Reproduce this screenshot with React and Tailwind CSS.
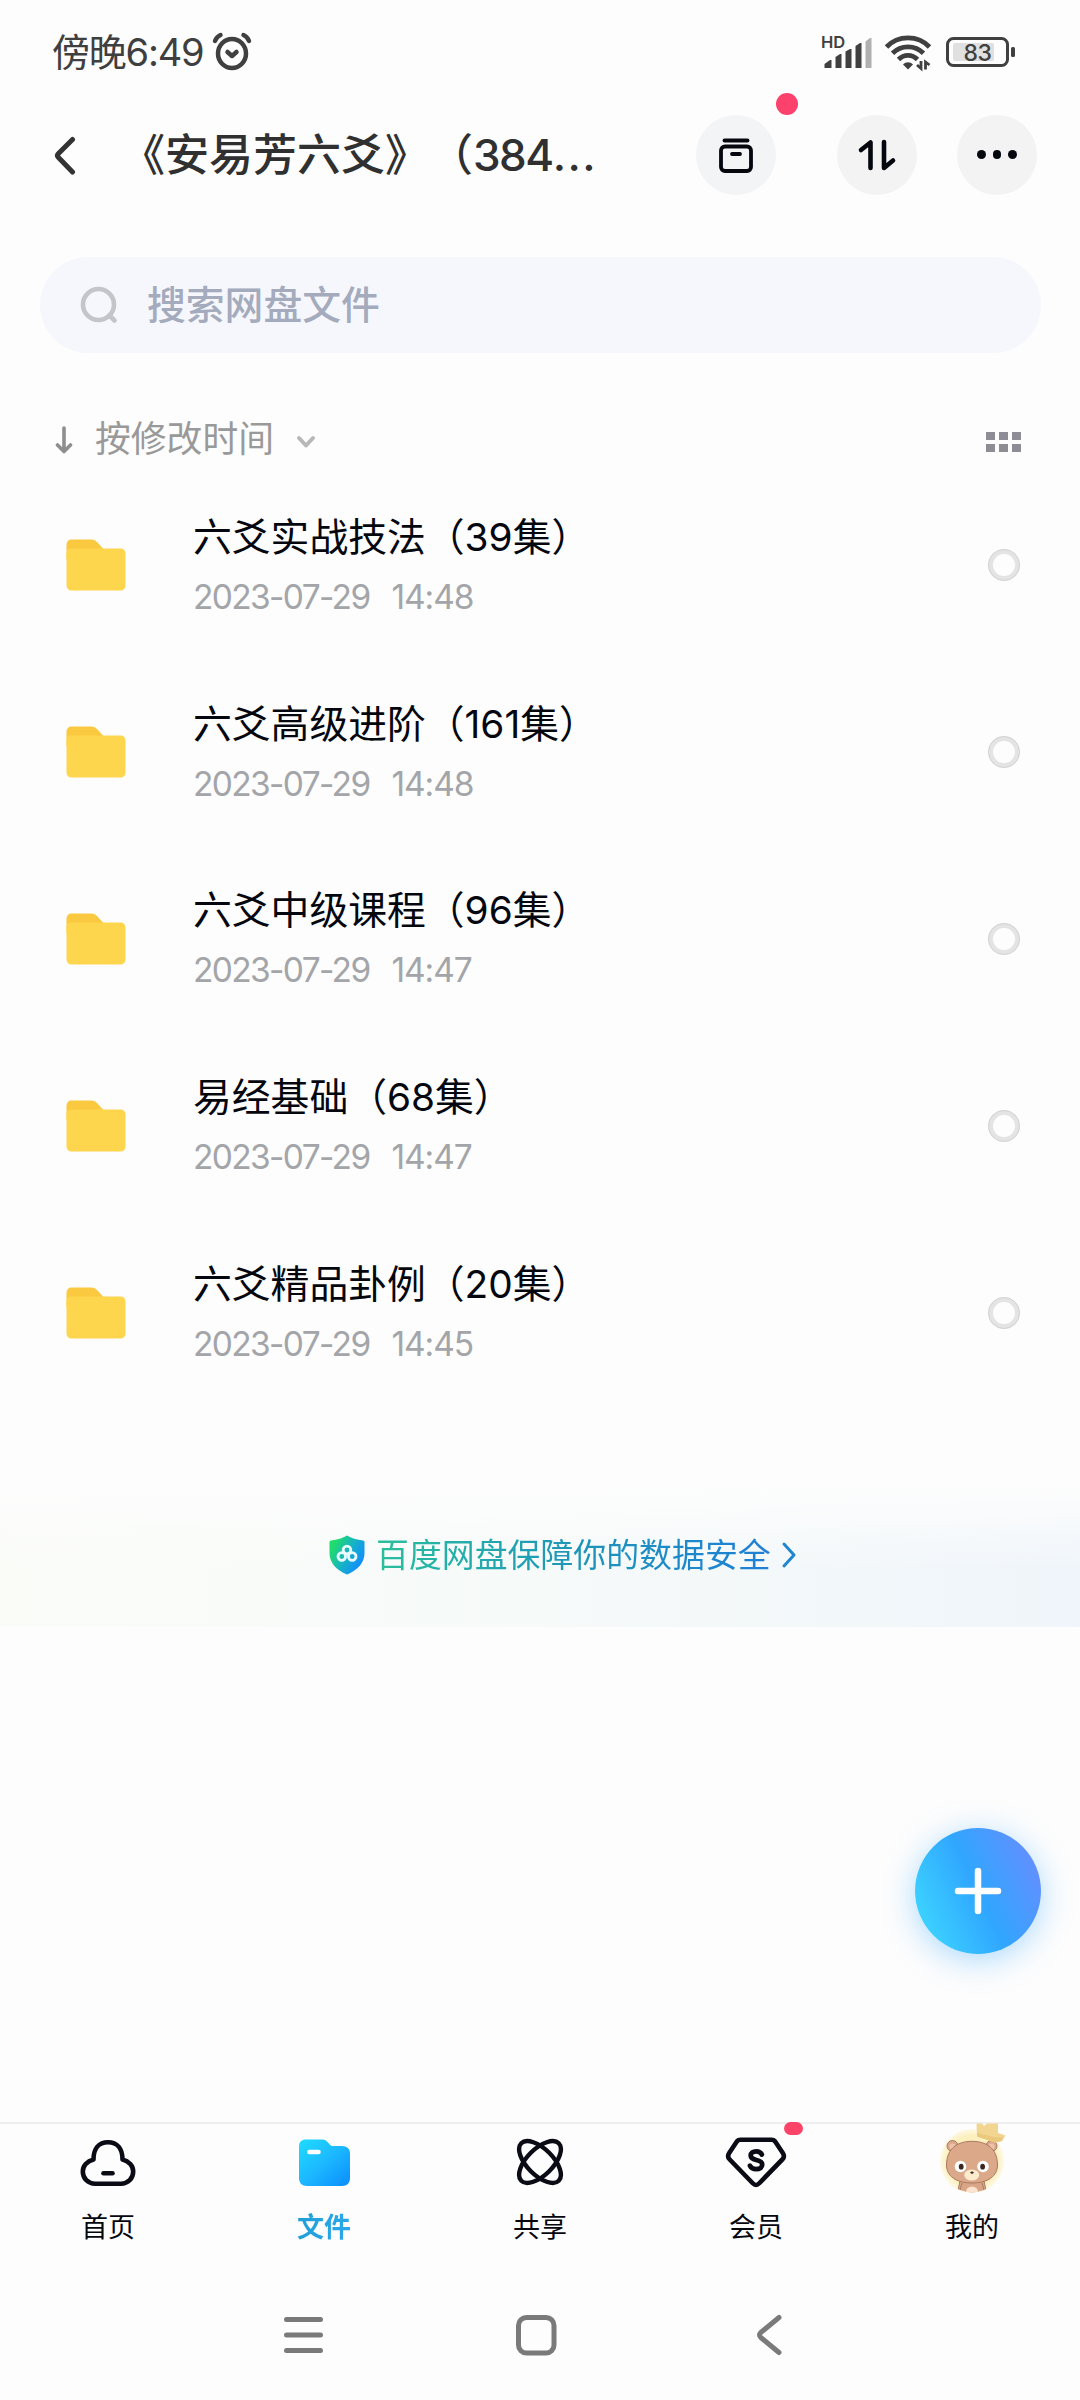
import React from 'react';

const FILES = [
  { name: ['六爻实战技法（', '39', '集）'], date: '2023-07-29', time: '14:48' },
  { name: ['六爻高级进阶（', '161', '集）'], date: '2023-07-29', time: '14:48' },
  { name: ['六爻中级课程（', '96', '集）'], date: '2023-07-29', time: '14:47' },
  { name: ['易经基础（', '68', '集）'], date: '2023-07-29', time: '14:47' },
  { name: ['六爻精品卦例（', '20', '集）'], date: '2023-07-29', time: '14:45' },
];

const TABS = [
  { label: '首页', icon: HomeIcon },
  { label: '文件', icon: FilesIcon, active: true },
  { label: '共享', icon: ShareIcon },
  { label: '会员', icon: MemberIcon, badge: true },
  { label: '我的', icon: BearAvatar },
];

function HomeIcon() {
  return (
    <svg className="mt-[2px]" width="56" height="48" viewBox="0 0 56 48" fill="none" stroke="#0b0b16" strokeWidth="4.6" strokeLinejoin="round">
      <path d="M13.5 20.5C13.5 9.500 19 3.300 28 3.300S42.500 9.500 42.500 20.500C49 22 53.200 27 53.200 32.500C53.200 39.500 48 44.700 41 44.700H15C8 44.700 2.800 39.500 2.800 32.500C2.800 27 7 22 13.500 20.500Z" />
      <path d="M23.500 34.200h9" strokeLinecap="round" />
    </svg>
  );
}

function FilesIcon() {
  return (
    <svg width="51" height="47" viewBox="0 0 51 47">
      <defs>
        <linearGradient id="tabFolder" x1="0" y1="0" x2="1" y2="1">
          <stop offset="0" stopColor="#1fdcff" />
          <stop offset="0.5" stopColor="#1cb8ff" />
          <stop offset="1" stopColor="#0a8dff" />
        </linearGradient>
      </defs>
      <path fill="url(#tabFolder)" d="M7 0.500H23C25.500 0.500 27 1.300 28.500 3L31 5.800C31.800 6.700 32.500 7 34 7H43C48 7 51 9.800 51 14.500V39C51 44 48 47 43 47H8C3 47 0 44 0 39V7.500C0 3 2.500 0.500 7 0.500Z" />
      <path d="M10.500 13h9" stroke="#fff" strokeWidth="4.600" strokeLinecap="round" />
    </svg>
  );
}

function ShareIcon() {
  return (
    <svg width="48" height="48" viewBox="0 0 48 48" fill="none" stroke="#0b0b16" strokeWidth="4.400">
      <ellipse cx="24" cy="24" rx="26.500" ry="13" transform="rotate(45 24 24)" />
      <ellipse cx="24" cy="24" rx="26.500" ry="13" transform="rotate(-45 24 24)" />
    </svg>
  );
}

function MemberIcon() {
  return (
    <svg width="62" height="51" viewBox="0 0 62 51" fill="none" stroke="#0b0b16" strokeLinecap="round" strokeLinejoin="round">
      <path strokeWidth="4.600" d="M15.500 2.800H46.500C48.300 2.800 49.500 3.500 50.500 5L57.800 16C59.500 18.600 59.300 20.500 57.300 22.500L34.500 46C32 48.600 30 48.600 27.500 46L4.700 22.500C2.700 20.500 2.500 18.600 4.200 16L11.500 5C12.500 3.500 13.700 2.800 15.500 2.800Z" />
      <path strokeWidth="4.800" d="M36.800 17.500C35.800 15.300 33.800 14.300 31.200 14.300C28 14.300 25.700 16 25.700 18.600C25.700 21.400 28.200 22.300 31.200 23C34.500 23.700 37.200 24.700 37.200 27.600C37.200 30.500 34.700 32.200 31.200 32.200C28.300 32.200 26 31 25 28.800" />
    </svg>
  );
}

function BearAvatar() {
  return (
    <svg className="-mt-[8px]" width="68" height="70" viewBox="0 0 68 70">
      <defs>
        <radialGradient id="halo">
          <stop offset="0.800" stopColor="#fdf0bf" />
          <stop offset="1" stopColor="#fef9e6" />
        </radialGradient>
        <clipPath id="avatarClip">
          <circle cx="34" cy="38" r="31.500" />
        </clipPath>
      </defs>
      <circle cx="34" cy="38" r="32" fill="url(#halo)" />
      <g clipPath="url(#avatarClip)" stroke="#a97a62" strokeWidth="1">
        <path fill="#d9a587" d="M22 58H46L49 72H19Z" />
        <ellipse cx="34" cy="69" rx="6" ry="5.500" fill="#fbe3d0" stroke="none" />
        <path fill="none" d="M24 60l-2 7M44 60l2 7" />
        <circle cx="14.500" cy="23" r="5.500" fill="#dca88a" />
        <circle cx="53.500" cy="23" r="5.500" fill="#dca88a" />
        <circle cx="14.500" cy="23.500" r="3" fill="#eec2aa" stroke="none" />
        <circle cx="53.500" cy="23.500" r="3" fill="#eec2aa" stroke="none" />
        <path fill="#dca88a" d="M34 18.300C50 18.300 59.500 27 59.500 42C59.500 53 50 60 34 60S8.500 53 8.500 42C8.500 27 18 18.300 34 18.300Z" />
      </g>
      <circle cx="22.500" cy="43.500" r="5.800" fill="#fff" />
      <circle cx="45" cy="43.500" r="5.800" fill="#fff" />
      <ellipse cx="23.200" cy="43.700" rx="2.400" ry="2.900" fill="#3d2620" />
      <ellipse cx="44.600" cy="43.700" rx="2.400" ry="2.900" fill="#3d2620" />
      <ellipse cx="33.700" cy="52" rx="7.500" ry="5.600" fill="#fdebcd" />
      <ellipse cx="34" cy="49.600" rx="1.600" ry="1.200" fill="#3d2620" />
      <path d="M38.500 0.500H44L46 3L49 0.500H60V10L67.500 12.500L64 18L57 19.500L39 13.500Z" fill="#f1d590" />
      <path d="M39 10L58 14.500L65 14L64 18L57 19.500L39 13.500Z" fill="#eac97c" />
    </svg>
  );
}

function FolderIcon() {
  return (
    <svg width="60" height="52" viewBox="0 0 60 52">
      <path fill="#fac93f" d="M6 0.500H25C28 0.500 29.500 1.500 31.500 3.500L37 9.500V20H0.500V6C0.500 2.500 2.500 0.500 6 0.500Z" />
      <path fill="#fdd64e" d="M0.500 15C0.500 11 2 9.500 6 9.500H54C57.500 9.500 59.500 11.500 59.500 15V46C59.500 49.500 57.500 51.500 54 51.500H6C2.500 51.500 0.500 49.500 0.500 46Z" />
    </svg>
  );
}

function StatusIcons() {
  return (
    <svg width="200" height="40" viewBox="820 32 200 40" fill="#404040">
      <text x="821" y="48" fontSize="16.500" fontWeight="600" fontFamily="Inter, sans-serif">HD</text>
      <path d="M824.500 64L830 60H831.500V68H824.500ZM835.500 57L840 54H841.500V68H835.500ZM845.500 51.500L850 49H851.500V68H845.500ZM855.500 46L860 43H861.500V68H855.500Z" />
      <path d="M865.500 41.500L870 38H871.500V68H865.500Z" fill="#b0b0b0" />
      {/* wifi arcs */}
      <g fill="none" stroke="#404040" strokeWidth="4.800">
        <path d="M886.500 47C898 34.800 918 34.800 929.500 47" />
        <path d="M892.500 53.300C901 44.800 915 44.800 923.500 53.300" />
        <path d="M898.500 59.500C904 54 912 54 917.500 59.500" />
      </g>
      <path d="M903 64.500C906 61.500 910 61.500 913 64.500L908 69.500Z" />
      <path d="M917 65l4 3.500V61M929.500 65l-4-3V69.500" fill="none" stroke="#404040" strokeWidth="2.800" />
      {/* battery */}
      <rect x="947.500" y="38.500" width="60" height="27" rx="6" fill="none" stroke="#404040" strokeWidth="3" />
      <rect x="953" y="43" width="41" height="18" rx="2" fill="#e0e0e0" />
      <rect x="1011" y="47" width="4" height="10" rx="1.500" />
      <text x="963.500" y="61" fontSize="23" fontWeight="500" fontFamily="Inter, sans-serif" letterSpacing="-0.500">83</text>
    </svg>
  );
}

function StatusBar() {
  return (
    <div className="flex h-[104px] items-center justify-between pl-[52px] pr-[60px] text-[#3f3f3f]">
      <div className="flex items-center gap-[9px]">
        <span className="text-[38px] leading-none tracking-[-1.2px]">傍晚6:49</span>
        <svg width="40" height="44" viewBox="0 0 40 44" fill="none" stroke="#404040" strokeWidth="4.500" strokeLinecap="round">
          <ellipse cx="20" cy="23.500" rx="14" ry="14.500" />
          <path d="M3 11C4 8.500 6 6 8.500 5M37 11C36 8.500 34 6 31.500 5" />
          <path d="M15.500 22l4.500 4l4.500-4" strokeLinejoin="round" />
        </svg>
      </div>
      <StatusIcons />
    </div>
  );
}

function Header() {
  return (
    <header className="flex h-[101px] items-center pl-[52px] pr-[42px]">
      <svg width="26" height="40" viewBox="0 0 26 40" fill="none" stroke="#333" strokeWidth="5" strokeLinecap="round" strokeLinejoin="round">
        <path d="M20.500 4.500L6 19C5.200 20 5.200 21 6 22L20.500 37" />
      </svg>
      <h1 className="ml-[43px] w-[575px] whitespace-nowrap text-[44px] font-medium leading-none text-[#303030] [text-spacing-trim:space-all]">
        《安易芳六爻》（<span className="tracking-[-1.5px]">384</span><span className="tracking-[1.5px]">...</span>
      </h1>
      <div className="relative flex size-20 items-center justify-center rounded-full bg-[#f3f4f6]">
        <svg width="36" height="36" viewBox="0 0 36 36" fill="none" stroke="#05070f" strokeWidth="3.800" strokeLinecap="round">
          <path d="M6.500 3.500h23" />
          <rect x="3" y="9.500" width="30" height="24.500" rx="4" />
          <path d="M14 17h8" />
        </svg>
        <span className="absolute -right-[22px] -top-[22px] size-[22px] rounded-full bg-[#fc416c]" />
      </div>
      <div className="ml-[61px] flex size-20 items-center justify-center rounded-full bg-[#f3f3f4]">
        <svg width="40" height="34" viewBox="0 0 40 34" fill="none" stroke="#05070f" strokeWidth="4.600" strokeLinecap="round" strokeLinejoin="round">
          <path d="M4 12L13.500 4.500V30" />
          <path d="M27 4V30L36 22.500" />
        </svg>
      </div>
      <div className="ml-[40px] flex size-20 items-center justify-center gap-[7px] rounded-full bg-[#f3f3f4]">
        <span className="size-[8.500px] rounded-full bg-[#05070f]" />
        <span className="size-[8.500px] rounded-full bg-[#05070f]" />
        <span className="size-[8.500px] rounded-full bg-[#05070f]" />
      </div>
    </header>
  );
}

function SearchBar() {
  return (
    <div className="ml-[40px] mr-[39px] mt-[52px] flex h-24 items-center rounded-full bg-[#f6f7fc] pl-[40px]">
      <svg width="38" height="38" viewBox="0 0 38 38" fill="none" stroke="#c3c5c9" strokeWidth="4.600" strokeLinecap="round">
        <circle cx="18.500" cy="18.500" r="15.500" />
        <path d="M29.500 29.500l5 5" />
      </svg>
      <span className="ml-[29px] text-[38.8px] font-medium leading-none text-[#a4abbc]">搜索网盘文件</span>
    </div>
  );
}

function SortRow() {
  return (
    <div className="flex h-[86px] items-center justify-between pl-[55px] pr-[59px] mt-[44px]">
      <div className="flex items-center">
        <svg width="18" height="28" viewBox="0 0 18 28" fill="none" stroke="#8e8e8e" strokeWidth="3.600" strokeLinecap="round" strokeLinejoin="round">
          <path d="M9 2V25M2.500 19L9 25.500L15.500 19" />
        </svg>
        <span className="ml-[22px] text-[35.8px] leading-none text-[#999]">按修改时间</span>
        <svg className="ml-[21px] mt-1" width="22" height="14" viewBox="0 0 22 14" fill="none" stroke="#b8b8b8" strokeWidth="4" strokeLinecap="round" strokeLinejoin="round">
          <path d="M4 3l7 7.500l7-7.500" />
        </svg>
      </div>
      <div className="mt-[4px] grid grid-cols-3 gap-x-[4px] gap-y-[3.500px]">
        {[0, 1, 2, 3, 4, 5].map((i) => (
          <span key={i} className="h-[8.500px] w-[9px] bg-[#8e8d96]" />
        ))}
      </div>
    </div>
  );
}

function FileRow({ file }) {
  const [before, count, after] = file.name;
  return (
    <li className="flex h-[186.8px] items-center pl-[66px] pr-[60px]">
      <FolderIcon />
      <div className="ml-[67px] flex flex-1 flex-col gap-[21px]">
        <span className="whitespace-nowrap text-[38.8px] leading-[42px] text-[#05070f]">
          {before}{count}{after}
        </span>
        <span className="flex gap-[22px] text-[33.5px] leading-[36px] tracking-[-1.65px] text-[#a3a5a9]">
          <span>{file.date}</span>
          <span className="tracking-[-1.1px]">{file.time}</span>
        </span>
      </div>
      <span className="size-8 rounded-full border-[5px] border-[#e4e4e4] outline outline-1 -outline-offset-1 outline-[#d4d4d4]" />
    </li>
  );
}

function SafetyBanner() {
  return (
    <div className="bg-gradient-to-r from-[#fafcf8] via-[#f6faf9] to-[#eff5fa]">
      <div className="flex h-[140px] items-center bg-gradient-to-b from-[#fdfdfd] to-transparent to-60% pb-[4px] pl-[329px]">
        <svg width="36" height="40" viewBox="0 0 36 40">
          <defs>
            <linearGradient id="shield" x1="0" y1="0.200" x2="1" y2="0.800">
              <stop offset="0.100" stopColor="#1fdc6c" />
              <stop offset="0.500" stopColor="#16b3c4" />
              <stop offset="0.900" stopColor="#118dff" />
            </linearGradient>
          </defs>
          <path fill="url(#shield)" d="M18 0.500C22 3 28 5 34 5.500Q35.500 5.700 35.500 7V18C35.500 27.500 29 35 18 39.500C7 35 0.500 27.500 0.500 18V7Q0.500 5.700 2 5.500C8 5 14 3 18 0.500Z" />
          <g fill="none" stroke="#e9fcff" strokeWidth="2.800">
            <circle cx="18" cy="15" r="3.800" />
            <circle cx="12.800" cy="21.500" r="3.800" />
            <circle cx="23.200" cy="21.500" r="3.800" />
          </g>
        </svg>
        <span className="ml-[11px] bg-gradient-to-r from-[#2bbf9c] via-[#1f95b8] to-[#1f7fd6] bg-clip-text text-[32.9px] leading-[44px] text-transparent">
          百度网盘保障你的数据安全
        </span>
        <svg className="ml-[9px]" width="18" height="28" viewBox="0 0 18 28" fill="none" stroke="#1f86cf" strokeWidth="3" strokeLinecap="round" strokeLinejoin="round">
          <path d="M4 3l10 11l-10 11" />
        </svg>
      </div>
    </div>
  );
}

function TabBar() {
  return (
    <nav className="grid h-[158px] grid-cols-5 border-t-2 border-[#eeeeee]">
      {TABS.map(({ label, icon: Icon, active, badge }) => (
        <div key={label} className="relative flex flex-col items-center">
          <div className="flex h-[76px] items-center justify-center">
            <Icon />
          </div>
          <span
            className={`mt-[13px] text-[27px] leading-[30px] ${
              active ? 'bg-gradient-to-r from-[#1f9fd8] to-[#2aa8ea] bg-clip-text font-bold text-transparent' : 'text-[#05070f]'
            }`}
          >
            {label}
          </span>
          {badge && <span className="absolute -top-[2px] left-[136px] h-[13px] w-[19px] rounded-full bg-[#fb4467]" />}
        </div>
      ))}
    </nav>
  );
}

function SystemNav() {
  return (
    <div className="flex h-[110px] items-center pl-[283px]">
      <svg width="41" height="42" viewBox="0 0 41 42" stroke="#7a7a7a" strokeWidth="5" strokeLinecap="round">
        <path d="M3.500 5.500h34M3.500 21h34M3.500 36.500h34" />
      </svg>
      <svg className="ml-[191px]" width="42" height="42" viewBox="0 0 42 42" fill="none" stroke="#7a7a7a" strokeWidth="5">
        <rect x="3.500" y="3.500" width="35.500" height="35.500" rx="8" />
      </svg>
      <svg className="ml-[199px]" width="28" height="42" viewBox="0 0 28 42" fill="none" stroke="#7a7a7a" strokeWidth="5" strokeLinecap="round" strokeLinejoin="round">
        <path d="M23 3.500L4.800 18.500Q2.200 21 4.800 23.500L23 38.500" />
      </svg>
    </div>
  );
}

export default function App() {
  return (
    <div lang="zh-CN" className="relative flex h-[2400px] w-[1080px] flex-col overflow-hidden bg-[#fdfdfd] font-[Inter,'Noto_Sans_CJK_SC',sans-serif]">
      <StatusBar />
      <Header />
      <SearchBar />
      <SortRow />
      <ul className="-mt-[11px]">
        {FILES.map((file) => (
          <FileRow key={file.name[0]} file={file} />
        ))}
      </ul>
      <div className="mt-[81px]">
        <SafetyBanner />
      </div>
      <div className="mt-auto">
        <TabBar />
        <div className="mb-[10px]">
          <SystemNav />
        </div>
      </div>

      {/* Floating upload button */}
      <button className="absolute left-[915px] top-[1828px] flex size-[126px] items-center justify-center rounded-full bg-[linear-gradient(65deg,#3dd6ff_8%,#30a6ff_50%,#6190ff_88%)] shadow-[0_6px_32px_rgba(60,170,255,0.42)]">
        <svg width="48" height="48" viewBox="0 0 48 48" stroke="#fff" strokeWidth="6.500" strokeLinecap="round">
          <path d="M24 4V44M4 24H44" />
        </svg>
      </button>
    </div>
  );
}
